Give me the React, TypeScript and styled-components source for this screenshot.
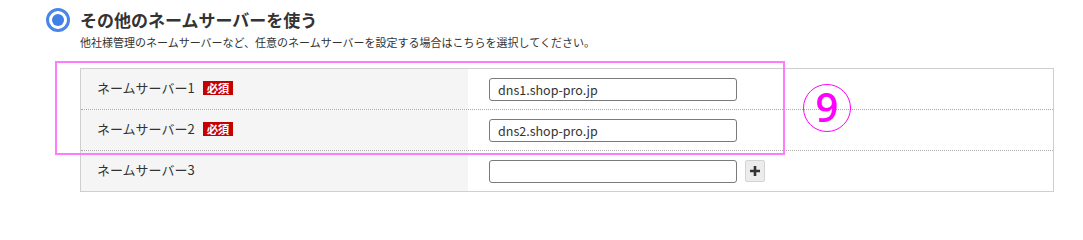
import React from "react";
import styled, { createGlobalStyle } from "styled-components";

const Global = createGlobalStyle`
  html, body { margin: 0; padding: 0; background: #fff; }
  body { font-family: "Noto Sans CJK JP", "Noto Sans", sans-serif; color: #333; }
  * { box-sizing: border-box; }
`;

const Page = styled.div`
  position: relative;
  width: 1083px;
  height: 204px;
  padding-top: 7px;
`;

const OptionRow = styled.div`
  display: flex;
  align-items: center;
  padding-left: 46px;
  gap: 10px;
  height: 26px;
`;

const Radio = styled.span`
  width: 24px;
  height: 24px;
  border-radius: 50%;
  border: 3px solid #4a86e8;
  display: flex;
  align-items: center;
  justify-content: center;
  &::after {
    content: "";
    width: 12px;
    height: 12px;
    border-radius: 50%;
    background: #3f7fe6;
  }
`;

const Title = styled.span`
  font-size: 17px;
  font-weight: 700;
  color: #333;
  line-height: 26px;
`;

const Note = styled.div`
  margin: 1px 0 0 80px;
  font-size: 11px;
  line-height: 16px;
  color: #333;
`;

const Table = styled.div`
  margin: 18px 0 0 80px;
  width: 974px;
  border: 1px solid #cfcfcf;
`;

const Row = styled.div<{ $last?: boolean }>`
  display: grid;
  grid-template-columns: 387px 1fr;
  height: ${(p) => (p.$last ? "40px" : "41px")};
  border-bottom: ${(p) => (p.$last ? "none" : "1px dotted #aaa")};
`;

const Label = styled.div`
  background: #f5f5f5;
  display: flex;
  align-items: center;
  padding: 0 0 3px 16px;
  font-size: 13px;
  color: #333;
`;

const Badge = styled.span`
  margin-left: 8px;
  background: #c40000;
  color: #fff;
  font-size: 11.5px;
  font-weight: 700;
  width: 30px;
  height: 14px;
  line-height: 14px;
  text-align: center;
  letter-spacing: -0.5px;
  overflow: hidden;
`;

const Value = styled.div`
  display: flex;
  align-items: center;
  padding-left: 21px;
  gap: 8px;
`;

const Input = styled.input`
  width: 248px;
  height: 23px;
  border: 1px solid #7a7a7a;
  border-radius: 3px;
  padding: 0 8px;
  font-family: "Noto Sans CJK JP", "Noto Sans", sans-serif;
  font-size: 12.5px;
  color: #333;
  background: #fff;
  outline: none;
`;

const PlusButton = styled.button`
  width: 20px;
  height: 22px;
  padding: 0;
  border: 1px solid #d4d4d4;
  border-radius: 2px;
  background: #ececec;
  display: flex;
  align-items: center;
  justify-content: center;
`;

const Highlight = styled.div`
  position: absolute;
  left: 55px;
  top: 61px;
  width: 730px;
  height: 94px;
  border: 2px solid #ff7cff;
  pointer-events: none;
`;

const Marker = styled.div`
  position: absolute;
  left: 803px;
  top: 84px;
  width: 48px;
  height: 48px;
  border-radius: 50%;
  border: 1.5px solid #ff00ff;
  color: #ff00ff;
  display: flex;
  align-items: center;
  justify-content: center;
  font-family: "Open Sans", "Noto Sans", sans-serif;
  font-size: 40px;
  font-weight: 600;
  line-height: 1;
  padding-bottom: 3px;
`;

const rows = [
  { label: "ネームサーバー1", required: true, value: "dns1.shop-pro.jp" },
  { label: "ネームサーバー2", required: true, value: "dns2.shop-pro.jp" },
  { label: "ネームサーバー3", required: false, value: "", plus: true },
];

export default function App() {
  return (
    <>
      <Global />
      <Page>
        <OptionRow>
          <Radio />
          <Title>その他のネームサーバーを使う</Title>
        </OptionRow>
        <Note>
          他社様管理のネームサーバーなど、任意のネームサーバーを設定する場合はこちらを選択してください。
        </Note>
        <Table>
          {rows.map((r, i) => (
            <Row key={r.label} $last={i === rows.length - 1}>
              <Label>
                {r.label}
                {r.required && <Badge>必須</Badge>}
              </Label>
              <Value>
                <Input defaultValue={r.value} readOnly />
                {r.plus && (
                  <PlusButton aria-label="追加">
                    <svg width="12" height="12" viewBox="0 0 12 12">
                      <path d="M6 1v10M1 6h10" stroke="#333" strokeWidth="2.6" />
                    </svg>
                  </PlusButton>
                )}
              </Value>
            </Row>
          ))}
        </Table>
        <Highlight />
        <Marker>9</Marker>
      </Page>
    </>
  );
}
